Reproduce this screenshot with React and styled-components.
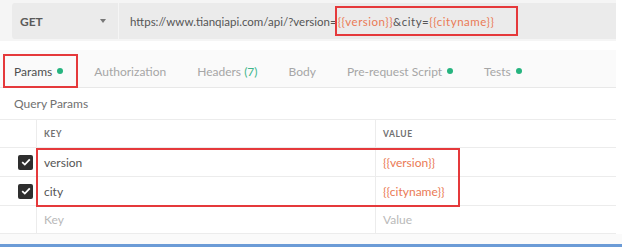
import React from "react";
import styled, { createGlobalStyle } from "styled-components";

const GlobalStyle = createGlobalStyle`
  html, body {
    margin: 0;
    padding: 0;
    background: #ffffff;
  }
  body {
    font-family: Lato, "Open Sans", "Liberation Sans", sans-serif;
    -webkit-font-smoothing: antialiased;
  }
`;

const Page = styled.div`
  width: 622px;
  height: 247px;
  overflow: hidden;
  display: flex;
  flex-direction: column;
  & > * {
    flex-shrink: 0;
  }
`;

const RequestBar = styled.div`
  width: 616px;
  height: 41px;
  box-sizing: border-box;
  padding: 3px 0 2px 12px;
  background: #f5f5f5;
  display: flex;
  gap: 1px;
`;

const MethodBox = styled.div`
  width: 106px;
  background: #ebebeb;
  border-radius: 3px 0 0 3px;
  display: flex;
  align-items: center;
  justify-content: space-between;
  padding: 0 12px 0 8px;
  box-sizing: border-box;
  font-size: 12px;
  font-weight: 700;
  color: #5a5a5a;
`;

const Caret = styled.span`
  width: 0;
  height: 0;
  border-left: 3.5px solid transparent;
  border-right: 3.5px solid transparent;
  border-top: 4px solid #777;
`;

const UrlBox = styled.div`
  flex: 1;
  background: #ebebeb;
  display: flex;
  align-items: center;
  padding-left: 11px;
  font-size: 11.5px;
  color: #555;
  white-space: nowrap;
`;

const Mark = styled.span`
  display: inline-flex;
  align-items: center;
  height: 30px;
  box-sizing: border-box;
  border: 2px solid #e5393b;
  margin-left: -2px;
  padding: 0 22px 0 1px;
  letter-spacing: 0.5px;
`;

const Var = styled.span`
  color: #ea7a55;
`;

const TabRow = styled.div`
  margin-top: 9px;
  width: 616px;
  height: 38px;
  box-sizing: border-box;
  padding: 4px 0 0 3px;
  background: #fafafa;
  border-bottom: 1px solid #e8e8e8;
  display: flex;
  gap: 5px;
`;

const Tab = styled.div`
  height: 34px;
  box-sizing: border-box;
  padding: 0 15px 0 11px;
  display: flex;
  align-items: center;
  gap: 5px;
  font-size: 12px;
  color: ${(p) => (p.$active ? "#4e4e4e" : "#a6a6a6")};
  outline: ${(p) => (p.$marked ? "2px solid #e5393b" : "none")};
  outline-offset: -2px;
`;

const Dot = styled.span`
  width: 6px;
  height: 6px;
  border-radius: 50%;
  background: #26b47f;
`;

const Count = styled.span`
  color: #3fb68a;
`;

const SectionTitle = styled.div`
  height: 31px;
  padding-left: 14px;
  display: flex;
  align-items: center;
  font-size: 12px;
  color: #707070;
`;

const TableWrap = styled.div`
  position: relative;
  width: 616px;
  border-top: 1px solid #ececec;
`;

const Row = styled.div`
  display: grid;
  grid-template-columns: 37px 339px 1fr;
  height: ${(p) => (p.$short ? "27px" : "28px")};
  border-bottom: 1px solid #ececec;
`;

const Cell = styled.div`
  display: flex;
  align-items: center;
  padding-left: ${(p) => (p.$check ? "18px" : "7px")};
  border-right: ${(p) => (p.$last ? "none" : "1px solid #ececec")};
  font-size: 12px;
  color: ${(p) => (p.$var ? "#ea7a55" : p.$ph ? "#b9b9b9" : "#555")};
`;

const HeadText = styled.span`
  font-size: 8.5px;
  font-weight: 700;
  letter-spacing: 0.6px;
  color: #707070;
`;

const Check = styled.span`
  width: 15px;
  height: 15px;
  border-radius: 2px;
  background: #2e2e2e;
  display: flex;
  align-items: center;
  justify-content: center;
`;

const RowMark = styled.div`
  position: absolute;
  left: 36px;
  top: 28px;
  width: 424px;
  height: 59px;
  box-sizing: border-box;
  border: 2px solid #e5393b;
  pointer-events: none;
`;

const Footer = styled.div`
  height: 10px;
  background: #fafafa;
  border-bottom: 3px solid #6b9bd6;
`;

const tabs = [
  { label: "Params", dot: true, active: true, marked: true },
  { label: "Authorization" },
  { label: "Headers", count: "(7)" },
  { label: "Body" },
  { label: "Pre-request Script", dot: true },
  { label: "Tests", dot: true },
];

const params = [
  { key: "version", value: "{{version}}" },
  { key: "city", value: "{{cityname}}" },
];

const CheckIcon = () => (
  <svg width="10" height="8" viewBox="0 0 10 8">
    <path d="M1.2 4.2 L3.8 6.6 L8.8 1.3" fill="none" stroke="#fff" strokeWidth="1.8" />
  </svg>
);

export default function App() {
  return (
    <Page>
      <GlobalStyle />
      <RequestBar>
        <MethodBox>
          GET
          <Caret />
        </MethodBox>
        <UrlBox>
          https://www.tianqiapi.com/api/?version=
          <Mark>
            <Var>{"{{version}}"}</Var>&amp;city=<Var>{"{{cityname}}"}</Var>
          </Mark>
        </UrlBox>
      </RequestBar>

      <TabRow>
        {tabs.map((t) => (
          <Tab key={t.label} $active={t.active} $marked={t.marked}>
            <span>
              {t.label}
              {t.count && <Count> {t.count}</Count>}
            </span>
            {t.dot && <Dot />}
          </Tab>
        ))}
      </TabRow>

      <SectionTitle>Query Params</SectionTitle>

      <TableWrap>
        <Row $short>
          <Cell $check />
          <Cell>
            <HeadText>KEY</HeadText>
          </Cell>
          <Cell $last>
            <HeadText>VALUE</HeadText>
          </Cell>
        </Row>
        {params.map((p) => (
          <Row key={p.key}>
            <Cell $check>
              <Check>
                <CheckIcon />
              </Check>
            </Cell>
            <Cell>{p.key}</Cell>
            <Cell $last $var>
              {p.value}
            </Cell>
          </Row>
        ))}
        <Row $short>
          <Cell $check />
          <Cell $ph>Key</Cell>
          <Cell $last $ph>
            Value
          </Cell>
        </Row>
        <RowMark />
      </TableWrap>
      <Footer />
    </Page>
  );
}
